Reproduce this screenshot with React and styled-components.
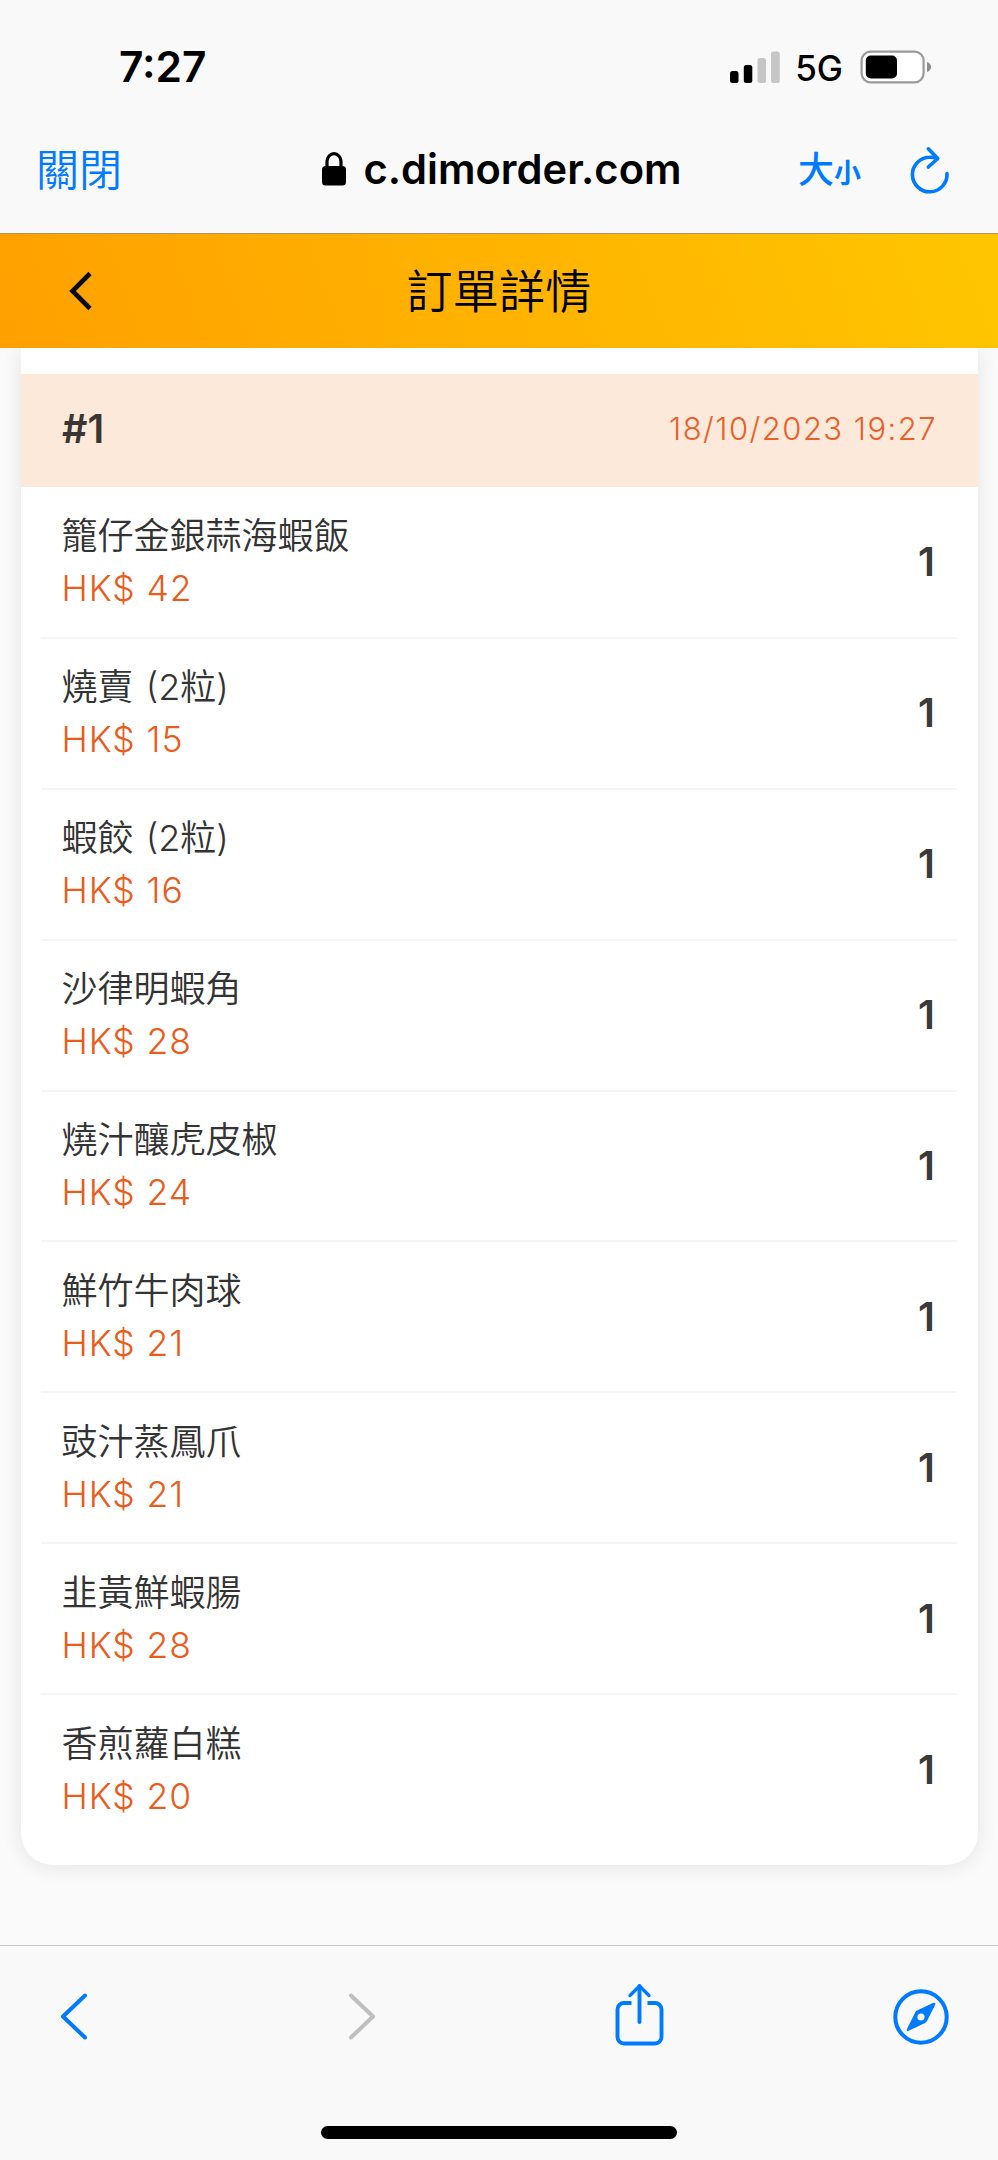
import styled, { createGlobalStyle } from "styled-components";

export default function App() {
  const items = [
    { name: "籠仔金銀蒜海蝦飯", price: 42, qty: 1 },
    { name: "燒賣 (2粒)", price: 15, qty: 1 },
    { name: "蝦餃 (2粒)", price: 16, qty: 1 },
    { name: "沙律明蝦角", price: 28, qty: 1 },
    { name: "燒汁釀虎皮椒", price: 24, qty: 1 },
    { name: "鮮竹牛肉球", price: 21, qty: 1 },
    { name: "豉汁蒸鳳爪", price: 21, qty: 1 },
    { name: "韭黃鮮蝦腸", price: 28, qty: 1 },
    { name: "香煎蘿白糕", price: 20, qty: 1 },
  ];

  return (
    <Screen>
      <GlobalStyle />
      <StatusBar>
        <Time>7:27</Time>
        <StatusIcons>
          <SignalIcon />
          <Network>5G</Network>
          <BatteryIcon />
        </StatusIcons>
      </StatusBar>
      <NavBar>
        <Close>關閉</Close>
        <Address>
          <LockIcon />
          <Host>c.dimorder.com</Host>
        </Address>
        <NavActions>
          <TextSize>
            <Big>大</Big>
            <Small>小</Small>
          </TextSize>
          <ReloadIcon />
        </NavActions>
      </NavBar>
      <Header>
        <HeaderBack>
          <svg width="26" height="42" viewBox="0 0 26 42" fill="none">
            <path d="M23 3.500L5.500 21 23 38.500" stroke="#0a0a0a" strokeWidth="4.600" />
          </svg>
        </HeaderBack>
        <HeaderTitle>訂單詳情</HeaderTitle>
      </Header>
      <Content>
        <Card>
          <Batch>
            <BatchNo>#1</BatchNo>
            <BatchDate>18/10/2023 19:27</BatchDate>
          </Batch>
          <List>
            {items.map((item, index) => {
              return (
                <Item key={index}>
                  <Info>
                    <Name>{item.name}</Name>
                    <Price>{`HK$ ${item.price}`}</Price>
                  </Info>
                  <Qty>{item.qty}</Qty>
                </Item>
              );
            })}
          </List>
        </Card>
      </Content>
      <Toolbar>
        <Tools>
          <Tool>
            <Chevron direction="left" color="#007aff" />
          </Tool>
          <Tool $left="12px">
            <Chevron direction="right" color="#bfbfbf" />
          </Tool>
          <Tool $left="2px" $bottom="6px">
            <ShareIcon />
          </Tool>
          <Tool>
            <CompassIcon />
          </Tool>
        </Tools>
        <HomeIndicator />
      </Toolbar>
    </Screen>
  );
}

const SignalIcon = () => (
  <svg width="50" height="32" viewBox="0 0 50 32">
    <rect x="0" y="20" width="8.500" height="12" rx="2.500" fill="#000" />
    <rect x="13.800" y="14" width="8.500" height="18" rx="2.500" fill="#000" />
    <rect x="27.500" y="7" width="8.500" height="25" rx="2.500" fill="#c6c6c6" />
    <rect x="41" y="0.500" width="8.800" height="31.500" rx="2.500" fill="#c6c6c6" />
  </svg>
);

const BatteryIcon = () => (
  <svg width="71" height="34" viewBox="0 0 71 34">
    <rect x="1.600" y="1.700" width="62" height="30.600" rx="9" fill="#fff" stroke="#999" strokeWidth="2.200" />
    <rect x="5.800" y="5.500" width="31.200" height="23" rx="5" fill="#000" />
    <path d="M67 12c2.600.9 4 2.600 4 5s-1.400 4.100-4 5z" fill="#8e8e8e" />
  </svg>
);

const LockIcon = () => (
  <svg width="24" height="34" viewBox="0 0 24 34">
    <rect x="0" y="14" width="24" height="19.500" rx="3.500" fill="#000" />
    <path d="M5 15V9.500a7 7.800 0 0 1 14 0V15" fill="none" stroke="#000" strokeWidth="3.200" />
  </svg>
);

const ReloadIcon = () => (
  <svg width="40" height="48" viewBox="0 0 40 48" fill="none" stroke="#007aff" strokeWidth="3.600" strokeLinecap="round" strokeLinejoin="round">
    <path d="M37 27.500A17.300 17.300 0 1 1 19.700 11.200Q23.500 11 27 12.500" />
    <path d="M18.300 2.800l9.500 9.700-9.500 8.500" />
  </svg>
);

const Chevron = ({ direction, color }) => (
  <svg width="28" height="48" viewBox="0 0 28 48" fill="none" stroke={color} strokeWidth="4" strokeLinecap="round" strokeLinejoin="round">
    <path d={direction === "left" ? "M25 2.500L3 23.500l22 21" : "M3 2.500l22 21-22 21"} />
  </svg>
);

const ShareIcon = () => (
  <svg width="49" height="63" viewBox="0 0 49 63" fill="none" stroke="#007aff" strokeWidth="3.900" strokeLinecap="round" strokeLinejoin="round">
    <path d="M24.500 3v36" />
    <path d="M15 12.500L24.500 3l9.500 9.500" strokeWidth="3.300" />
    <path d="M16.500 20H9a6.500 6.500 0 0 0-6.500 6.500v27.500A6.500 6.500 0 0 0 9 60.500h31a6.500 6.500 0 0 0 6.500-6.500V26.500A6.500 6.500 0 0 0 40 20h-7.500" strokeLinecap="butt" />
  </svg>
);

const CompassIcon = () => (
  <svg width="56" height="56" viewBox="0 0 56 56">
    <circle cx="28" cy="28" r="25.700" fill="none" stroke="#007aff" strokeWidth="4" />
    <path
      d="M40.500 13.800L24 21.600q-1.200.7-1.800 1.800L13.700 40.500q-.5 1.900 1.500 1.600L32 34q1.300-.7 2-1.900l8.300-16.600q.6-2.300-1.800-1.700z"
      fill="#007aff"
    />
    <circle cx="28" cy="28" r="3.600" fill="#f9f9f9" />
  </svg>
);

const GlobalStyle = createGlobalStyle`
  body {
    margin: 0;
    background-color: #fafafa;
  }
`;

const Screen = styled.div`
  display: flex;
  flex-direction: column;
  width: 998px;
  height: 2160px;
  overflow: hidden;
  font-family: Inter, "Noto Sans CJK TC", sans-serif;
  color: #000;
  background-color: #fafafa;

  svg {
    display: block;
    flex-shrink: 0;
  }
`;

const StatusBar = styled.div`
  display: flex;
  justify-content: space-between;
  align-items: center;
  box-sizing: border-box;
  height: 132px;
  padding: 1px 67px 0 119px;
  background-color: #f9f9f9;
`;

const Time = styled.div`
  font-size: 42.500px;
  font-weight: 600;
  line-height: 48px;
`;

const StatusIcons = styled.div`
  display: flex;
  align-items: center;
`;

const Network = styled.div`
  margin: 2px 17px 0 15px;
  font-size: 35px;
  font-weight: 500;
  line-height: 40px;
`;

const NavBar = styled.div`
  display: grid;
  grid-template-columns: 1fr auto 1fr;
  align-items: center;
  box-sizing: border-box;
  height: 102px;
  padding: 0 35px 26px 36px;
  border-bottom: 1px solid #a59467;
  background-color: #f9f9f9;
`;

const Close = styled.div`
  font-size: 43px;
  font-weight: 350;
  line-height: 50px;
  color: #007aff;
`;

const Address = styled.div`
  display: flex;
  align-items: center;
  gap: 17px;
  padding: 0 0 2px 5px;
`;

const Host = styled.div`
  font-size: 41.700px;
  font-weight: 600;
  line-height: 50px;
`;

const NavActions = styled.div`
  display: flex;
  justify-content: flex-end;
  align-items: center;
  gap: 49px;
  padding-right: 13px;
`;

const TextSize = styled.div`
  display: flex;
  align-items: baseline;
  padding-top: 5px;
  line-height: 50px;
  color: #007aff;
`;

const Big = styled.span`
  font-size: 36px;
  font-weight: 500;
`;

const Small = styled.span`
  font-size: 27px;
  font-weight: 700;
`;

const Header = styled.header`
  display: grid;
  grid-template-columns: 1fr auto 1fr;
  align-items: center;
  height: 114px;
  background-image: linear-gradient(70deg, #ffa000, #ffc600);
`;

const HeaderBack = styled.div`
  padding-left: 67px;
`;

const HeaderTitle = styled.div`
  font-size: 46px;
  font-weight: 350;
  line-height: 60px;
  letter-spacing: 0.3px;
`;

const Content = styled.main`
  height: 1597px;
  overflow: hidden;
`;

const Card = styled.section`
  box-sizing: border-box;
  height: 1517px;
  margin: 0 20px 0 21px;
  padding-top: 26px;
  border-radius: 0 0 32px 32px;
  background-color: #fff;
  box-shadow: 0 2px 20px rgba(0, 0, 0, 0.09);
`;

const Batch = styled.div`
  display: flex;
  justify-content: space-between;
  align-items: center;
  height: 113px;
  padding: 0 41px;
  background-color: #fce9da;
`;

const BatchNo = styled.div`
  padding-bottom: 4px;
  font-size: 39.500px;
  font-weight: 600;
  color: #3b3631;
`;

const BatchDate = styled.div`
  padding-bottom: 4px;
  font-size: 31px;
  font-weight: 350;
  letter-spacing: 1.45px;
  color: #e8602a;
`;

const List = styled.ul`
  margin: 0 21px 0 20px;
  padding: 1px 0 0;
  list-style: none;
`;

const Item = styled.li`
  display: flex;
  justify-content: space-between;
  align-items: center;
  box-sizing: border-box;
  height: 150.900px;
  padding: 20px 22px 20px 20.500px;
  border-bottom: 2px solid #f5f5f5;

  &:last-child {
    border-bottom-color: transparent;
  }
`;

const Info = styled.div`
  padding-top: 1px;
`;

const Name = styled.div`
  font-size: 36px;
  font-weight: 350;
  line-height: 53px;
  word-spacing: 2px;
  color: #333;
`;

const Price = styled.div`
  font-size: 35.500px;
  font-weight: 350;
  line-height: 52px;
  letter-spacing: 0.9px;
  color: #e85c1c;
`;

const Qty = styled.div`
  font-size: 40px;
  font-weight: 600;
  line-height: 54px;
  color: #3a3a3a;
`;

const Toolbar = styled.footer`
  display: flex;
  flex-direction: column;
  align-items: center;
  justify-content: space-between;
  box-sizing: border-box;
  height: 215px;
  padding: 38px 0 21px;
  border-top: 1px solid #c6c6c6;
  background-color: #f9f9f9;
`;

const Tools = styled.div`
  display: flex;
  justify-content: space-between;
  align-items: center;
  box-sizing: border-box;
  width: 100%;
  height: 66px;
  padding: 0 45px 0 42px;
`;

const Tool = styled.div`
  display: flex;
  justify-content: center;
  align-items: center;
  box-sizing: border-box;
  width: 64px;
  padding-left: ${(props) => props.$left || 0};
  padding-bottom: ${(props) => props.$bottom || 0};
`;

const HomeIndicator = styled.div`
  width: 356px;
  height: 13px;
  border-radius: 7px;
  background-color: #000;
`;
